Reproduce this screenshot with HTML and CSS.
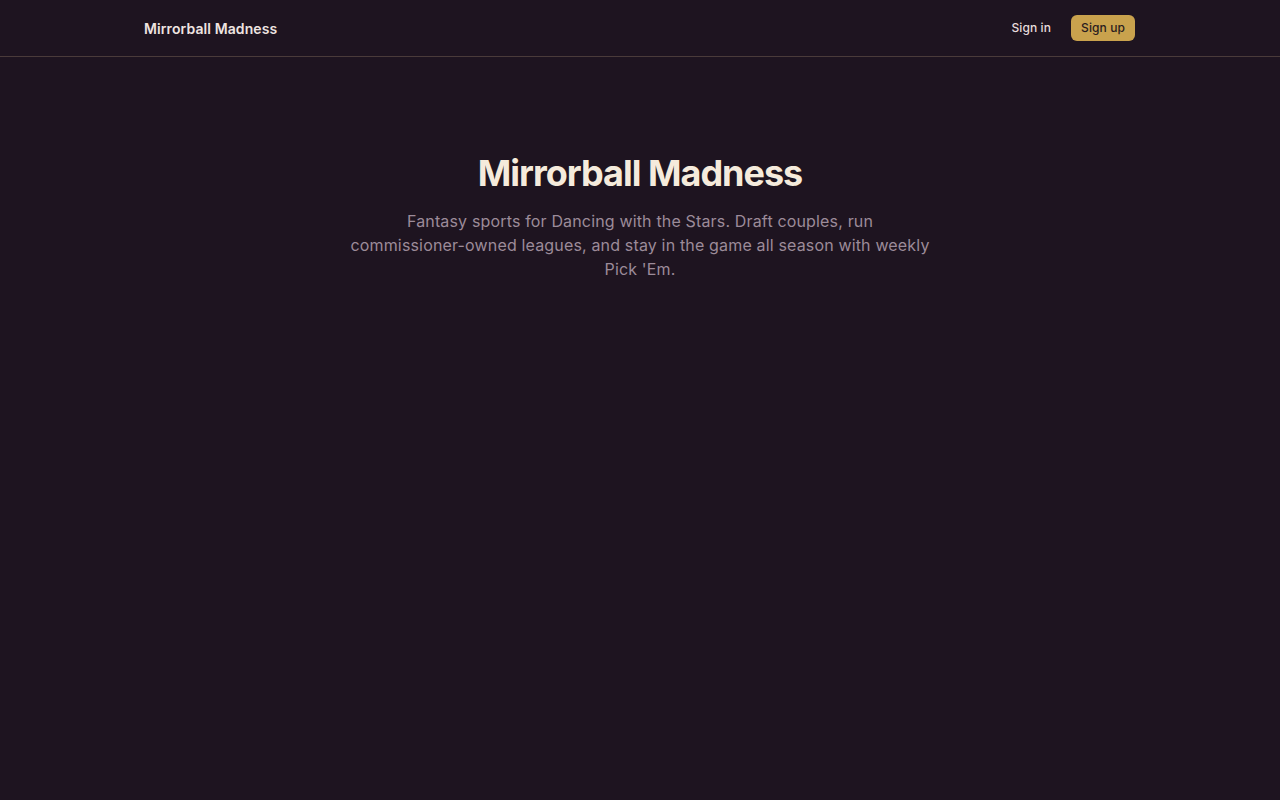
FILE: index.html
```html
<!DOCTYPE html>
<html lang="en">
<head>
<meta charset="utf-8">
<title>Mirrorball Madness</title>
<link rel="stylesheet" href="styles.css">
</head>
<body>
<header class="site-header">
  <div class="container header-inner">
    <a class="brand" href="#">Mirrorball Madness</a>
    <nav class="nav">
      <a class="nav-link" href="#">Sign in</a>
      <a class="btn-signup" href="#">Sign up</a>
    </nav>
  </div>
</header>
<main class="container hero">
  <h1 class="hero-title">Mirrorball Madness</h1>
  <p class="hero-text">Fantasy sports for Dancing with the Stars. Draft couples, run commissioner-owned leagues, and stay in the game all season with weekly Pick 'Em.</p>
</main>
</body>
</html>
```
FILE: styles.css
```css
* { box-sizing: border-box; }
html, body {
  margin: 0;
  padding: 0;
  background: #1e1420;
  min-height: 100%;
}
body {
  font-family: Inter, "Noto Sans", sans-serif;
  color: #f3e9dc;
  -webkit-font-smoothing: antialiased;
}
a { text-decoration: none; color: inherit; }
.container {
  max-width: 1024px;
  margin: 0 auto;
  padding: 0 16px;
}
.site-header {
  border-bottom: 1px solid #4a3b3a;
}
.header-inner {
  height: 56px;
  display: flex;
  align-items: center;
  justify-content: space-between;
}
.brand {
  font-size: 14px;
  font-weight: 600;
  letter-spacing: 0.1px;
  color: #efe4e0;
}
.nav {
  display: flex;
  align-items: center;
  gap: 20px;
  margin-right: 1px;
}
.nav-link {
  font-size: 12px;
  font-weight: 500;
  line-height: 16px;
  letter-spacing: 0.1px;
  color: #e8dcdc;
}
.btn-signup {
  font-size: 12px;
  font-weight: 500;
  line-height: 16px;
  letter-spacing: 0.1px;
  padding: 5px 10px;
  border-radius: 6px;
  background: #c9a24d;
  color: #2a1c20;
}
.hero {
  padding-top: 96px;
  padding-bottom: 96px;
  text-align: center;
}
.hero-title {
  margin: 0;
  font-size: 36px;
  line-height: 40px;
  font-weight: 700;
  letter-spacing: -0.028em;
  color: #f5ebdc;
}
.hero-text {
  margin: 16px auto 0;
  max-width: 581px;
  font-size: 16px;
  line-height: 24px;
  letter-spacing: 0.16px;
  color: #9c8b99;
}
```
